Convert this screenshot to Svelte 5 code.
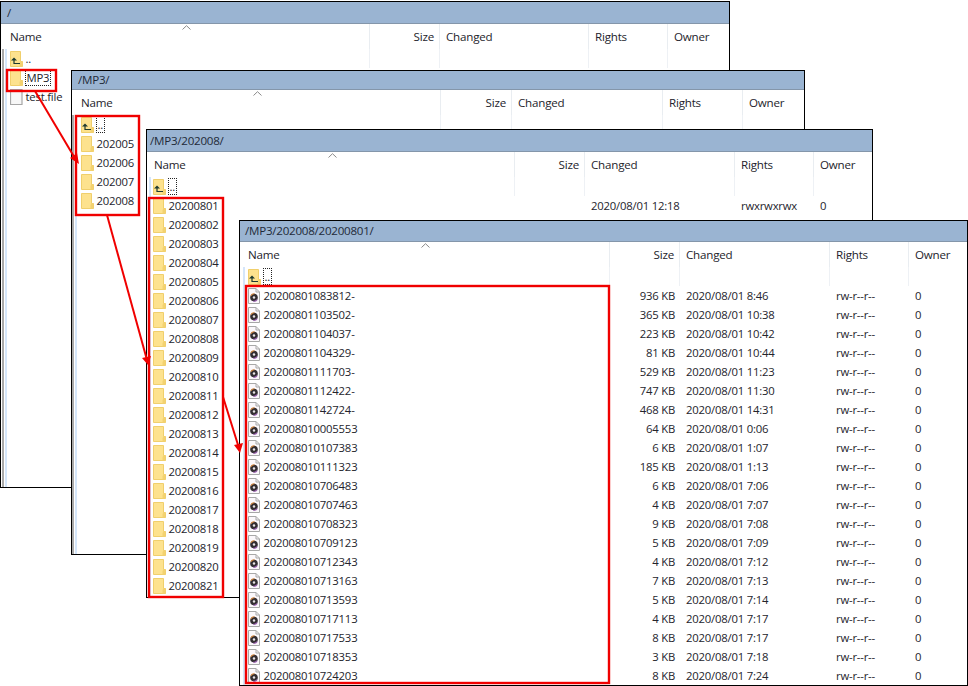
<script>
	const wins = [
		{
			cls: 'w1', path: '/',
			rows: [
				{ up: true, name: '..', dotted: false },
				{ folder: true, name: 'MP3', dotted: true },
				{ file: true, name: 'test.file' }
			]
		},
		{
			cls: 'w2', path: '/MP3/',
			rows: [
				{ up: true, name: '..', dotted: true },
				...['202005', '202006', '202007', '202008'].map((name) => ({ folder: true, name }))
			]
		},
		{
			cls: 'w3', path: '/MP3/202008/',
			rows: [
				{ up: true, name: '..', dotted: true },
				...Array.from({ length: 21 }, (_, i) => ({
					folder: true,
					name: '202008' + String(i + 1).padStart(2, '0'),
					...(i === 0 ? { changed: '2020/08/01 12:18', rights: 'rwxrwxrwx', owner: '0' } : {})
				}))
			]
		},
		{
			cls: 'w4', path: '/MP3/202008/20200801/',
			rows: [
				{ up: true, name: '..', dotted: true },
				...[
					['20200801083812-', '936 KB', '8:46'],
					['20200801103502-', '365 KB', '10:38'],
					['20200801104037-', '223 KB', '10:42'],
					['20200801104329-', '81 KB', '10:44'],
					['20200801111703-', '529 KB', '11:23'],
					['20200801112422-', '747 KB', '11:30'],
					['20200801142724-', '468 KB', '14:31'],
					['202008010005553', '64 KB', '0:06'],
					['202008010107383', '6 KB', '1:07'],
					['202008010111323', '185 KB', '1:13'],
					['202008010706483', '6 KB', '7:06'],
					['202008010707463', '4 KB', '7:07'],
					['202008010708323', '9 KB', '7:08'],
					['202008010709123', '5 KB', '7:09'],
					['202008010712343', '4 KB', '7:12'],
					['202008010713163', '7 KB', '7:13'],
					['202008010713593', '5 KB', '7:14'],
					['202008010717113', '4 KB', '7:17'],
					['202008010717533', '8 KB', '7:17'],
					['202008010718353', '3 KB', '7:18'],
					['202008010724203', '8 KB', '7:24']
				].map(([name, size, t]) => ({
					audio: true,
					name,
					size,
					changed: '2020/08/01 ' + t,
					rights: 'rw-r--r--',
					owner: '0'
				}))
			]
		}
	];

	// red callouts drawn over the windows
	const boxes = [
		[7, 70, 49, 21],
		[76, 116, 63, 99],
		[149, 198, 74, 399],
		[246, 286, 363, 397]
	];
	const arrows = [
		{ line: '35,91 76,160', head: '79,164 70,158 77,153' },
		{ line: '107,215 147,360', head: '148,365 142,358 151,356' },
		{ line: '223,397 239,448', head: '240,453 234,445 243,443' }
	];
</script>

{#snippet folderIcon()}
	<svg class="ico" width="13" height="16" viewBox="0 0 13 16">
		<path d="M0.5 0.5H10.5V10.5H12.5V15.5H0.5Z" fill="#fde28e" stroke="#f0cf6c" />
		<path d="M10.5 10.5H12.5V15.5H9.5V12Z" fill="#f3d270" />
	</svg>
{/snippet}

{#snippet upIcon()}
	<svg class="ico" width="13" height="16" viewBox="0 0 13 16">
		<path d="M0.5 0.5H10.5V10.5H12.5V15.5H0.5Z" fill="#fde28e" stroke="#f0cf6c" />
		<path d="M10.5 10.5H12.5V15.5H9.5V12Z" fill="#f3d270" />
		<path d="M1 9.5L4 6.5L7 9.5Z" fill="#1e3a30" />
		<path d="M4 9V12.5H10" fill="none" stroke="#1e3a30" stroke-width="1.2" />
	</svg>
{/snippet}

{#snippet plainIcon()}
	<svg class="ico" width="13" height="16" viewBox="0 0 13 16">
		<path d="M0.5 0.5H12V15.5H0.5Z" fill="#f7f7f7" stroke="#a6a6a6" stroke-width="1.2" />
	</svg>
{/snippet}

{#snippet audioIcon()}
	<svg class="ico" width="13" height="16" viewBox="0 0 13 16">
		<path d="M0.5 0.5H8L11.5 4V15.5H0.5Z" fill="#fbf8fb" stroke="#a8a8a8" />
		<path d="M8 0.5V4H11.5" fill="none" stroke="#a8a8a8" />
		<circle cx="6" cy="9.5" r="3.8" fill="#332e32" />
		<path d="M2.9 7.8A3.8 3.8 0 0 1 6.6 5.8" fill="none" stroke="#d98a3e" stroke-width="1.1" />
		<path d="M9.1 11.6A3.8 3.8 0 0 1 5.2 13.2" fill="none" stroke="#9a5fb0" stroke-width="1.1" />
		<circle cx="6" cy="9.5" r="1.2" fill="#e9e4e8" />
	</svg>
{/snippet}

<div class="desk">
	{#each wins as win}
		<section class="win {win.cls}">
			<h2 class="title">{win.path}</h2>
			<div class="cols head">
				<div class="c name">
					Name
					<svg class="caret" width="9" height="5" viewBox="0 0 9 5">
						<path d="M0.5 4.5L4.5 0.7L8.5 4.5" fill="none" stroke="#8a8a8a" />
					</svg>
				</div>
				<div class="c size">Size</div>
				<div class="c changed">Changed</div>
				<div class="c rights">Rights</div>
				<div class="c owner">Owner</div>
			</div>
			<div class="list">
				{#each win.rows as row}
					<div class="cols row">
						<div class="c name">
							{#if row.up}{@render upIcon()}{:else if row.folder}{@render folderIcon()}{:else if row.audio}{@render audioIcon()}{:else}{@render plainIcon()}{/if}
							<span class="label" class:dotted={row.dotted}>{row.name}</span>
						</div>
						<div class="c size">{row.size ?? ''}</div>
						<div class="c changed">{row.changed ?? ''}</div>
						<div class="c rights">{row.rights ?? ''}</div>
						<div class="c owner">{row.owner ?? ''}</div>
					</div>
				{/each}
			</div>
		</section>
	{/each}

	<svg class="callouts" width="968" height="686">
		{#each boxes as [x, y, w, h]}
			<rect {x} {y} width={w} height={h} fill="none" stroke="#f00000" stroke-width="2.4" />
		{/each}
		{#each arrows as a}
			<polyline points={a.line} fill="none" stroke="#f00000" stroke-width="2" />
			<polygon points={a.head} fill="#f00000" />
		{/each}
	</svg>
</div>

<style>
	:global(body) {
		background: #fff;
		overflow: hidden;
	}

	.desk {
		position: relative;
		width: 968px;
		height: 686px;
		overflow: hidden;
		font-family: "Open Sans", "Liberation Sans", sans-serif;
		font-size: 11.3px;
		letter-spacing: -0.2px;
		color: #24242c;
	}

	.win {
		--n: 369px;
		--s: 70px;
		--d: 149px;
		--r: 79px;
		--m: 3.5px;
		--p: 3px;
		--title: 22px;
		--head: 25px;
		--tp: 5px;
		--np: 9px;
		position: absolute;
		box-sizing: border-box;
		display: flex;
		flex-direction: column;
		background: #fff;
		border: 1.5px solid #000;
		overflow: hidden;
	}
	.w1 { left: 0; top: 1px; width: 730px; height: 487px; --tp: 6px; }
	.w2 { left: 71px; top: 70px; width: 734px; height: 485px; --s: 71px; --d: 151px; --r: 80px; --m: 2.5px; --p: 4px; --title: 19px; --tp: 6px; }
	.w3 { left: 146px; top: 129px; width: 727px; height: 469px; --n: 368px; --d: 150px; --m: 1.5px; --p: 2px; --tp: 3px; --np: 7px; }
	.w4 { left: 239px; top: 220px; width: 729px; height: 466px; --n: 370px; --d: 150px; --m: 2.5px; --title: 21px; --np: 8px; }

	.title {
		box-sizing: border-box;
		flex: none;
		margin: 0;
		height: var(--title);
		line-height: calc(var(--title) - 1px);
		padding-left: var(--tp);
		background: #9ab4d2;
		border-bottom: 1px solid #8496aa;
		font-size: 11.6px;
		letter-spacing: -0.25px;
		font-weight: 400;
		color: #1f2a38;
	}

	.cols {
		display: grid;
		grid-template-columns: var(--n) var(--s) var(--d) var(--r) 1fr;
	}
	.head {
		height: var(--head);
		flex: none;
	}
	.head .c {
		line-height: 26px;
		font-size: 11.6px;
		border-right: 1px solid #e9edf1;
	}
	.head .owner {
		border-right: 0;
	}

	.c {
		box-sizing: border-box;
		padding-left: 6px;
		white-space: nowrap;
		overflow: hidden;
	}
	.c.name {
		padding-left: var(--np);
		position: relative;
		display: flex;
		align-items: center;
		gap: 2px;
	}
	.head .c.name {
		display: block;
	}
	.c.size {
		padding: 0 5px 0 0;
		text-align: right;
	}

	.caret {
		position: absolute;
		left: 181px;
		top: 1px;
	}

	.list {
		flex: 1;
		margin-left: var(--m);
		border-left: 2px solid #d5e6fa;
	}
	.w1 .list, .w2 .list {
		box-shadow: -1px 0 0 #fff, -3px 0 0 #a9a9a9;
	}
	.list .cols {
		grid-template-columns: calc(var(--n) - var(--m) - 2px) var(--s) var(--d) var(--r) 1fr;
		height: 19px;
		line-height: 19px;
	}
	.row .c.name {
		padding-left: var(--p);
	}
	.row:first-child .c:not(.owner) {
		border-right: 1px solid #eef1f5;
	}
	.ico {
		flex: none;
	}
	.label {
		line-height: 15px;
		border: 1px solid transparent;
	}
	.dotted {
		padding: 0 1px;
		border: 1px dotted #222;
	}

	.callouts {
		position: absolute;
		left: 0;
		top: 0;
		pointer-events: none;
	}
</style>
